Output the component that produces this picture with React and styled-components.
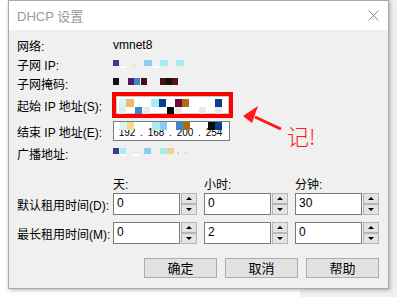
import React from 'react';
import styled, { createGlobalStyle } from 'styled-components';

const GlobalStyle = createGlobalStyle`
  body {
    margin: 0;
    background: #fff;
    font-family: "Liberation Sans", "Noto Sans CJK SC", sans-serif;
  }
`;

const Page = styled.div`
  width: 397px;
  height: 297px;
  overflow: hidden;
  background: linear-gradient(to right, #fff 0, #fff 300px, #f0f0f0 300px);
`;

const Window = styled.div`
  margin-left: 8px;
  width: 381px;
  height: 289px;
  box-sizing: border-box;
  border: 1px solid #a9a9a9;
  box-shadow: 1px 1px 4px rgba(0, 0, 0, 0.3);
  background: #f0f0f0;
  display: flex;
  flex-direction: column;
`;

const TitleBar = styled.div`
  height: 29px;
  flex: none;
  background: #fff;
  display: flex;
  align-items: center;
  justify-content: space-between;
  padding: 0 9px 0 8px;
  font-size: 13px;
  color: #9a9a9a;
`;

const Body = styled.div`
  position: relative;
  flex: 1;
  padding: 6px 9px 0 8px;
  font-size: 12px;
  color: #000;
`;

const InfoRow = styled.div`
  display: grid;
  grid-template-columns: 96px auto;
  align-items: center;
  height: ${p => p.h}px;
  margin-top: ${p => p.mt || 0}px;
`;

const Label = styled.span`
  white-space: nowrap;
`;

const Value = styled.span`
  font-size: 12px;
`;

const Blur = styled.div`
  position: relative;
  height: 8px;
`;

const MarkedBox = styled.div`
  width: 121px;
  height: 26px;
  box-sizing: border-box;
  border: 4px solid #ff0000;
  margin-left: -1px;
  display: flex;
`;

const Field = styled.div`
  position: relative;
  flex: ${p => (p.w ? 'none' : 1)};
  width: ${p => (p.w ? p.w + 'px' : 'auto')};
  height: ${p => (p.h ? p.h + 'px' : 'auto')};
  box-sizing: border-box;
  border: 1px solid ${p => p.line || '#7a7a7a'};
  background: #fff;
`;

const IpText = styled.div`
  display: flex;
  align-items: flex-end;
  height: 100%;
  font-size: 10px;
  line-height: 14px;
  color: #000;
`;

const Octet = styled.span`
  width: 26px;
  text-align: center;
`;

const Dot = styled.span`
  width: 3px;
  text-align: center;
`;

const Cover = styled.svg`
  position: absolute;
  left: ${p => p.x || 0}px;
  top: ${p => p.y || 0}px;
`;

const TimeGrid = styled.div`
  display: grid;
  grid-template-columns: 89px 84px 84px 84px;
  column-gap: 7px;
  align-items: center;
  margin-top: ${p => p.mt || 0}px;
  height: ${p => p.h}px;
`;

const HeadCell = styled.span`
  grid-column: ${p => p.col};
`;

const Spin = styled.div`
  display: flex;
  height: 22px;
`;

const SpinField = styled.div`
  flex: 1;
  box-sizing: border-box;
  border: 1px solid #7a7a7a;
  background: #fff;
  padding-left: 3px;
  line-height: 19px;
  font-size: 12px;
`;

const SpinButtons = styled.div`
  width: 16px;
  display: flex;
  flex-direction: column;
  margin-left: 1px;
`;

const SpinBtn = styled.div`
  flex: 1;
  box-sizing: border-box;
  border: 1px solid #b5b5b5;
  background: #e3e3e3;
  display: flex;
  align-items: center;
  justify-content: center;
`;

const Arrow = styled.span`
  width: 0;
  height: 0;
  border-left: 3px solid transparent;
  border-right: 3px solid transparent;
  ${p => (p.up ? 'border-bottom: 3px solid #000;' : 'border-top: 3px solid #000;')}
`;

const Buttons = styled.div`
  display: flex;
  justify-content: flex-end;
  gap: 8px;
  margin-top: 14px;
`;

const Button = styled.button`
  width: 73px;
  height: 20px;
  box-sizing: border-box;
  border: 1px solid #adadad;
  background: #e1e1e1;
  font-family: "Noto Sans CJK SC", sans-serif;
  font-size: 13px;
  line-height: 16px;
  padding: 0;
  color: #000;
`;

const Annotation = styled.svg`
  position: absolute;
  left: 231px;
  top: 66px;
`;

const Note = styled.span`
  position: absolute;
  left: 278px;
  top: 93px;
  font-family: "Noto Sans CJK SC", sans-serif;
  font-size: 22px;
  line-height: 24px;
  color: #ff1a1a;
  font-weight: 300;
`;

function Mosaic({ w, h, cells, x, y }) {
  return (
    <Cover width={w} height={h} x={x} y={y}>
      {cells.map(([cx, cy, cw, ch, c], i) => (
        <rect key={i} x={cx} y={cy} width={cw} height={ch} fill={c} />
      ))}
    </Cover>
  );
}

const subnetIp = [
  [0, 0, 6, 6, '#3b3b85'], [8, 5, 2, 2, '#d8d8e4'], [20, 5, 2, 2, '#e0d8e4'],
  [31, 0, 8, 6, '#8ccdf2'], [47, 0, 8, 6, '#a8ecef'], [63, 0, 8, 6, '#a8ecef'],
  [7, 6, 6, 2, '#fff'], [40, 6, 6, 2, '#fff'],
];
const subnetMask = [
  [0, 0, 6, 7, '#111'], [15, 0, 6, 7, '#4b1a6b'], [21, 0, 6, 7, '#3b86cc'],
  [28, 0, 6, 7, '#4a0f12'], [47, 0, 6, 7, '#4a0f12'], [53, 0, 6, 7, '#111'],
  [59, 0, 6, 7, '#5c0f14'],
];
const startIp = [
  [3, 3, 7, 8, '#d4f8f8'], [10, 3, 8, 8, '#f2b86e'], [35, 3, 8, 8, '#a8ecef'],
  [43, 3, 7, 8, '#0b3e8c'], [59, 3, 7, 8, '#6b0b3e'], [66, 3, 7, 8, '#b3690f'],
  [99, 3, 7, 8, '#0b3e8c'],
  [3, 11, 7, 7, '#e8e8e8'], [19, 11, 7, 7, '#3b86cc'], [27, 11, 7, 7, '#e8e8e8'],
  [51, 11, 7, 7, '#0a0a0a'], [59, 11, 7, 7, '#e8e8e8'], [83, 11, 7, 7, '#e8e8e8'],
  [99, 11, 7, 7, '#e8e8e8'],
];
const endIp = [
  [6, 0, 7, 8, '#d4f8f8'], [13, 0, 7, 8, '#f6d890'], [38, 0, 8, 8, '#a8ecef'],
  [46, 0, 7, 8, '#8ccdf2'], [62, 0, 7, 8, '#3b86cc'], [69, 0, 7, 8, '#b3690f'],
  [94, 0, 7, 8, '#0a0a0a'], [101, 0, 7, 8, '#0b3e8c'],
];
const broadcast = [
  [0, 0, 6, 6, '#3b3b85'], [7, 0, 6, 6, '#a8ecef'], [31, 0, 7, 6, '#8ccdf2'],
  [47, 0, 7, 6, '#a8ecef'], [54, 0, 7, 6, '#f0d090'], [64, 4, 2, 2, '#e0c8d8'],
  [72, 4, 2, 2, '#d8d8e8'], [7, 6, 6, 2, '#fff'], [20, 6, 6, 2, '#fff'],
];

function Spinner({ value }) {
  return (
    <Spin>
      <SpinField>{value}</SpinField>
      <SpinButtons>
        <SpinBtn><Arrow up /></SpinBtn>
        <SpinBtn><Arrow /></SpinBtn>
      </SpinButtons>
    </Spin>
  );
}

export default function App() {
  return (
    <Page>
      <GlobalStyle />
      <Window>
        <TitleBar>
          <span>DHCP 设置</span>
          <svg width="11" height="11" viewBox="0 0 11 11">
            <path d="M0.5 0.5L10.5 10.5M10.5 0.5L0.5 10.5" stroke="#8a8a8a" strokeWidth="1" />
          </svg>
        </TitleBar>
        <Body>
          <InfoRow h={18}>
            <Label>网络:</Label>
            <Value>vmnet8</Value>
          </InfoRow>
          <InfoRow h={20}>
            <Label>子网 IP:</Label>
            <Blur>
              <Mosaic w={80} h={8} y={0} cells={subnetIp} />
            </Blur>
          </InfoRow>
          <InfoRow h={18}>
            <Label>子网掩码:</Label>
            <Blur>
              <Mosaic w={80} h={8} y={-1} cells={subnetMask} />
            </Blur>
          </InfoRow>
          <InfoRow h={26}>
            <Label>起始 IP 地址(S):</Label>
            <MarkedBox>
              <Field line="#c8c8c8">
                <Mosaic w={111} h={18} x={-1} y={-1} cells={startIp} />
              </Field>
            </MarkedBox>
          </InfoRow>
          <InfoRow h={20} mt={3}>
            <Label>结束 IP 地址(E):</Label>
            <Field w={117} h={20}>
              <IpText>
                <Octet>192</Octet><Dot>.</Dot>
                <Octet>168</Octet><Dot>.</Dot>
                <Octet>200</Octet><Dot>.</Dot>
                <Octet>254</Octet>
              </IpText>
              <Mosaic w={115} h={8} x={0} y={0} cells={endIp} />
            </Field>
          </InfoRow>
          <InfoRow h={24}>
            <Label>广播地址:</Label>
            <Blur>
              <Mosaic w={80} h={8} y={-1} cells={broadcast} />
            </Blur>
          </InfoRow>

          <TimeGrid h={20} mt={8}>
            <HeadCell col={2}>天:</HeadCell>
            <HeadCell col={3}>小时:</HeadCell>
            <HeadCell col={4}>分钟:</HeadCell>
          </TimeGrid>
          <TimeGrid h={22}>
            <Label>默认租用时间(D):</Label>
            <Spinner value="0" />
            <Spinner value="0" />
            <Spinner value="30" />
          </TimeGrid>
          <TimeGrid h={22} mt={7}>
            <Label>最长租用时间(M):</Label>
            <Spinner value="0" />
            <Spinner value="2" />
            <Spinner value="0" />
          </TimeGrid>

          <Buttons>
            <Button>确定</Button>
            <Button>取消</Button>
            <Button>帮助</Button>
          </Buttons>

          <Annotation width="42" height="34" viewBox="0 0 42 34">
            <path d="M15 21L41 33" stroke="#ff1a1a" strokeWidth="3" />
            <polygon points="3,20 18,10 12,27" fill="#ff1a1a" />
          </Annotation>
          <Note>记!</Note>
        </Body>
      </Window>
    </Page>
  );
}
